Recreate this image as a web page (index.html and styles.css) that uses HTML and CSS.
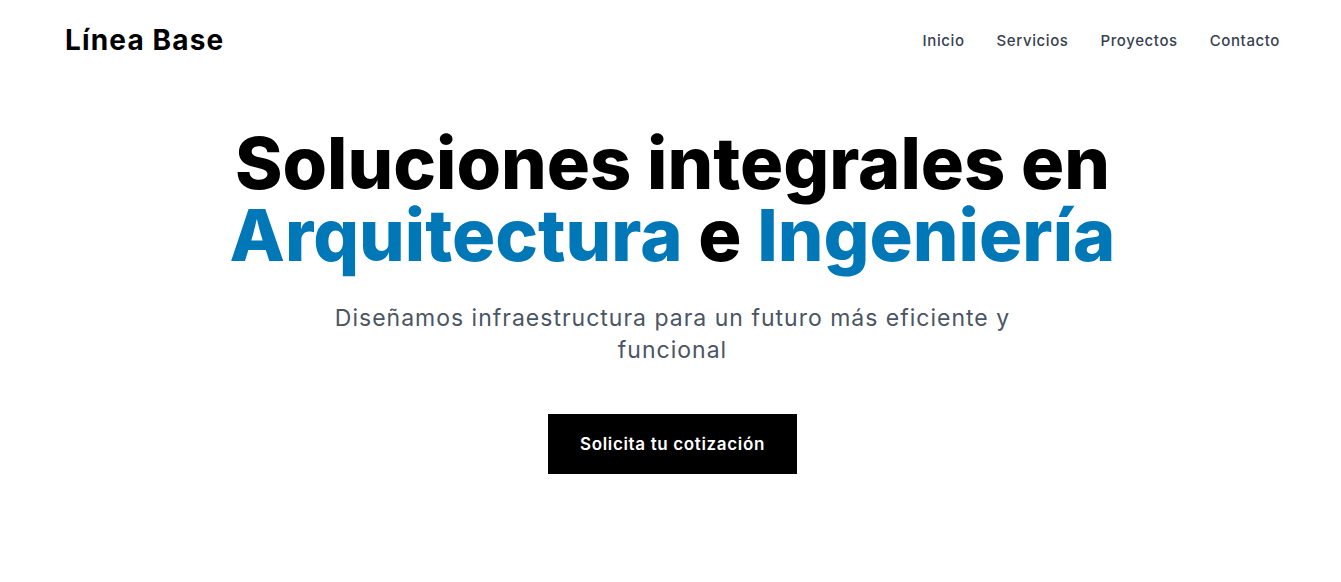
FILE: index.html
```html
<!DOCTYPE html>
<html lang="es">
<head>
<meta charset="utf-8">
<title>Línea Base</title>
<link rel="stylesheet" href="styles.css">
</head>
<body>
<div class="page">
  <header class="header">
    <div class="logo">Línea Base</div>
    <nav class="nav">
      <a href="#">Inicio</a>
      <a href="#">Servicios</a>
      <a href="#">Proyectos</a>
      <a href="#">Contacto</a>
    </nav>
  </header>
  <main class="hero">
    <h1 class="title">Soluciones integrales en<br><span class="accent">Arquitectura</span> e <span class="accent">Ingeniería</span></h1>
    <p class="subtitle">Diseñamos infraestructura para un futuro más eficiente y funcional</p>
    <a class="cta" href="#">Solicita tu cotización</a>
  </main>
</div>
</body>
</html>
```
FILE: styles.css
```css
* { box-sizing: border-box; }
html, body { margin: 0; padding: 0; background: #fff; }
body { font-family: "Inter", "Open Sans", sans-serif; color: #000; }
.page { padding: 0 61px 0 65px; }
.header {
  display: flex;
  justify-content: space-between;
  align-items: center;
  height: 80px;
}
.logo { font-size: 28px; font-weight: 700; letter-spacing: 1.15px; }
.nav { display: flex; gap: 32px; }
.nav a { color: #374151; text-decoration: none; font-size: 15px; font-weight: 500; letter-spacing: 0.6px; }
.hero {
  display: flex;
  flex-direction: column;
  align-items: center;
  text-align: center;
  padding-top: 47px;
}
.title {
  margin: 0;
  font-size: 72px;
  line-height: 72px;
  font-weight: 800;
  letter-spacing: 0;
}
.accent { color: #0077b6; }
.subtitle {
  margin: 31px 0 0;
  max-width: 700px;
  font-size: 23px;
  line-height: 32px;
  color: #4b5563;
  font-weight: 400;
  letter-spacing: 1px;
}
.cta {
  margin-top: 48px;
  display: inline-block;
  background: #000;
  color: #fff;
  text-decoration: none;
  font-size: 17px;
  font-weight: 600;
  padding: 20px 32px;
  line-height: 20px;
  letter-spacing: 0.65px;
}
```
